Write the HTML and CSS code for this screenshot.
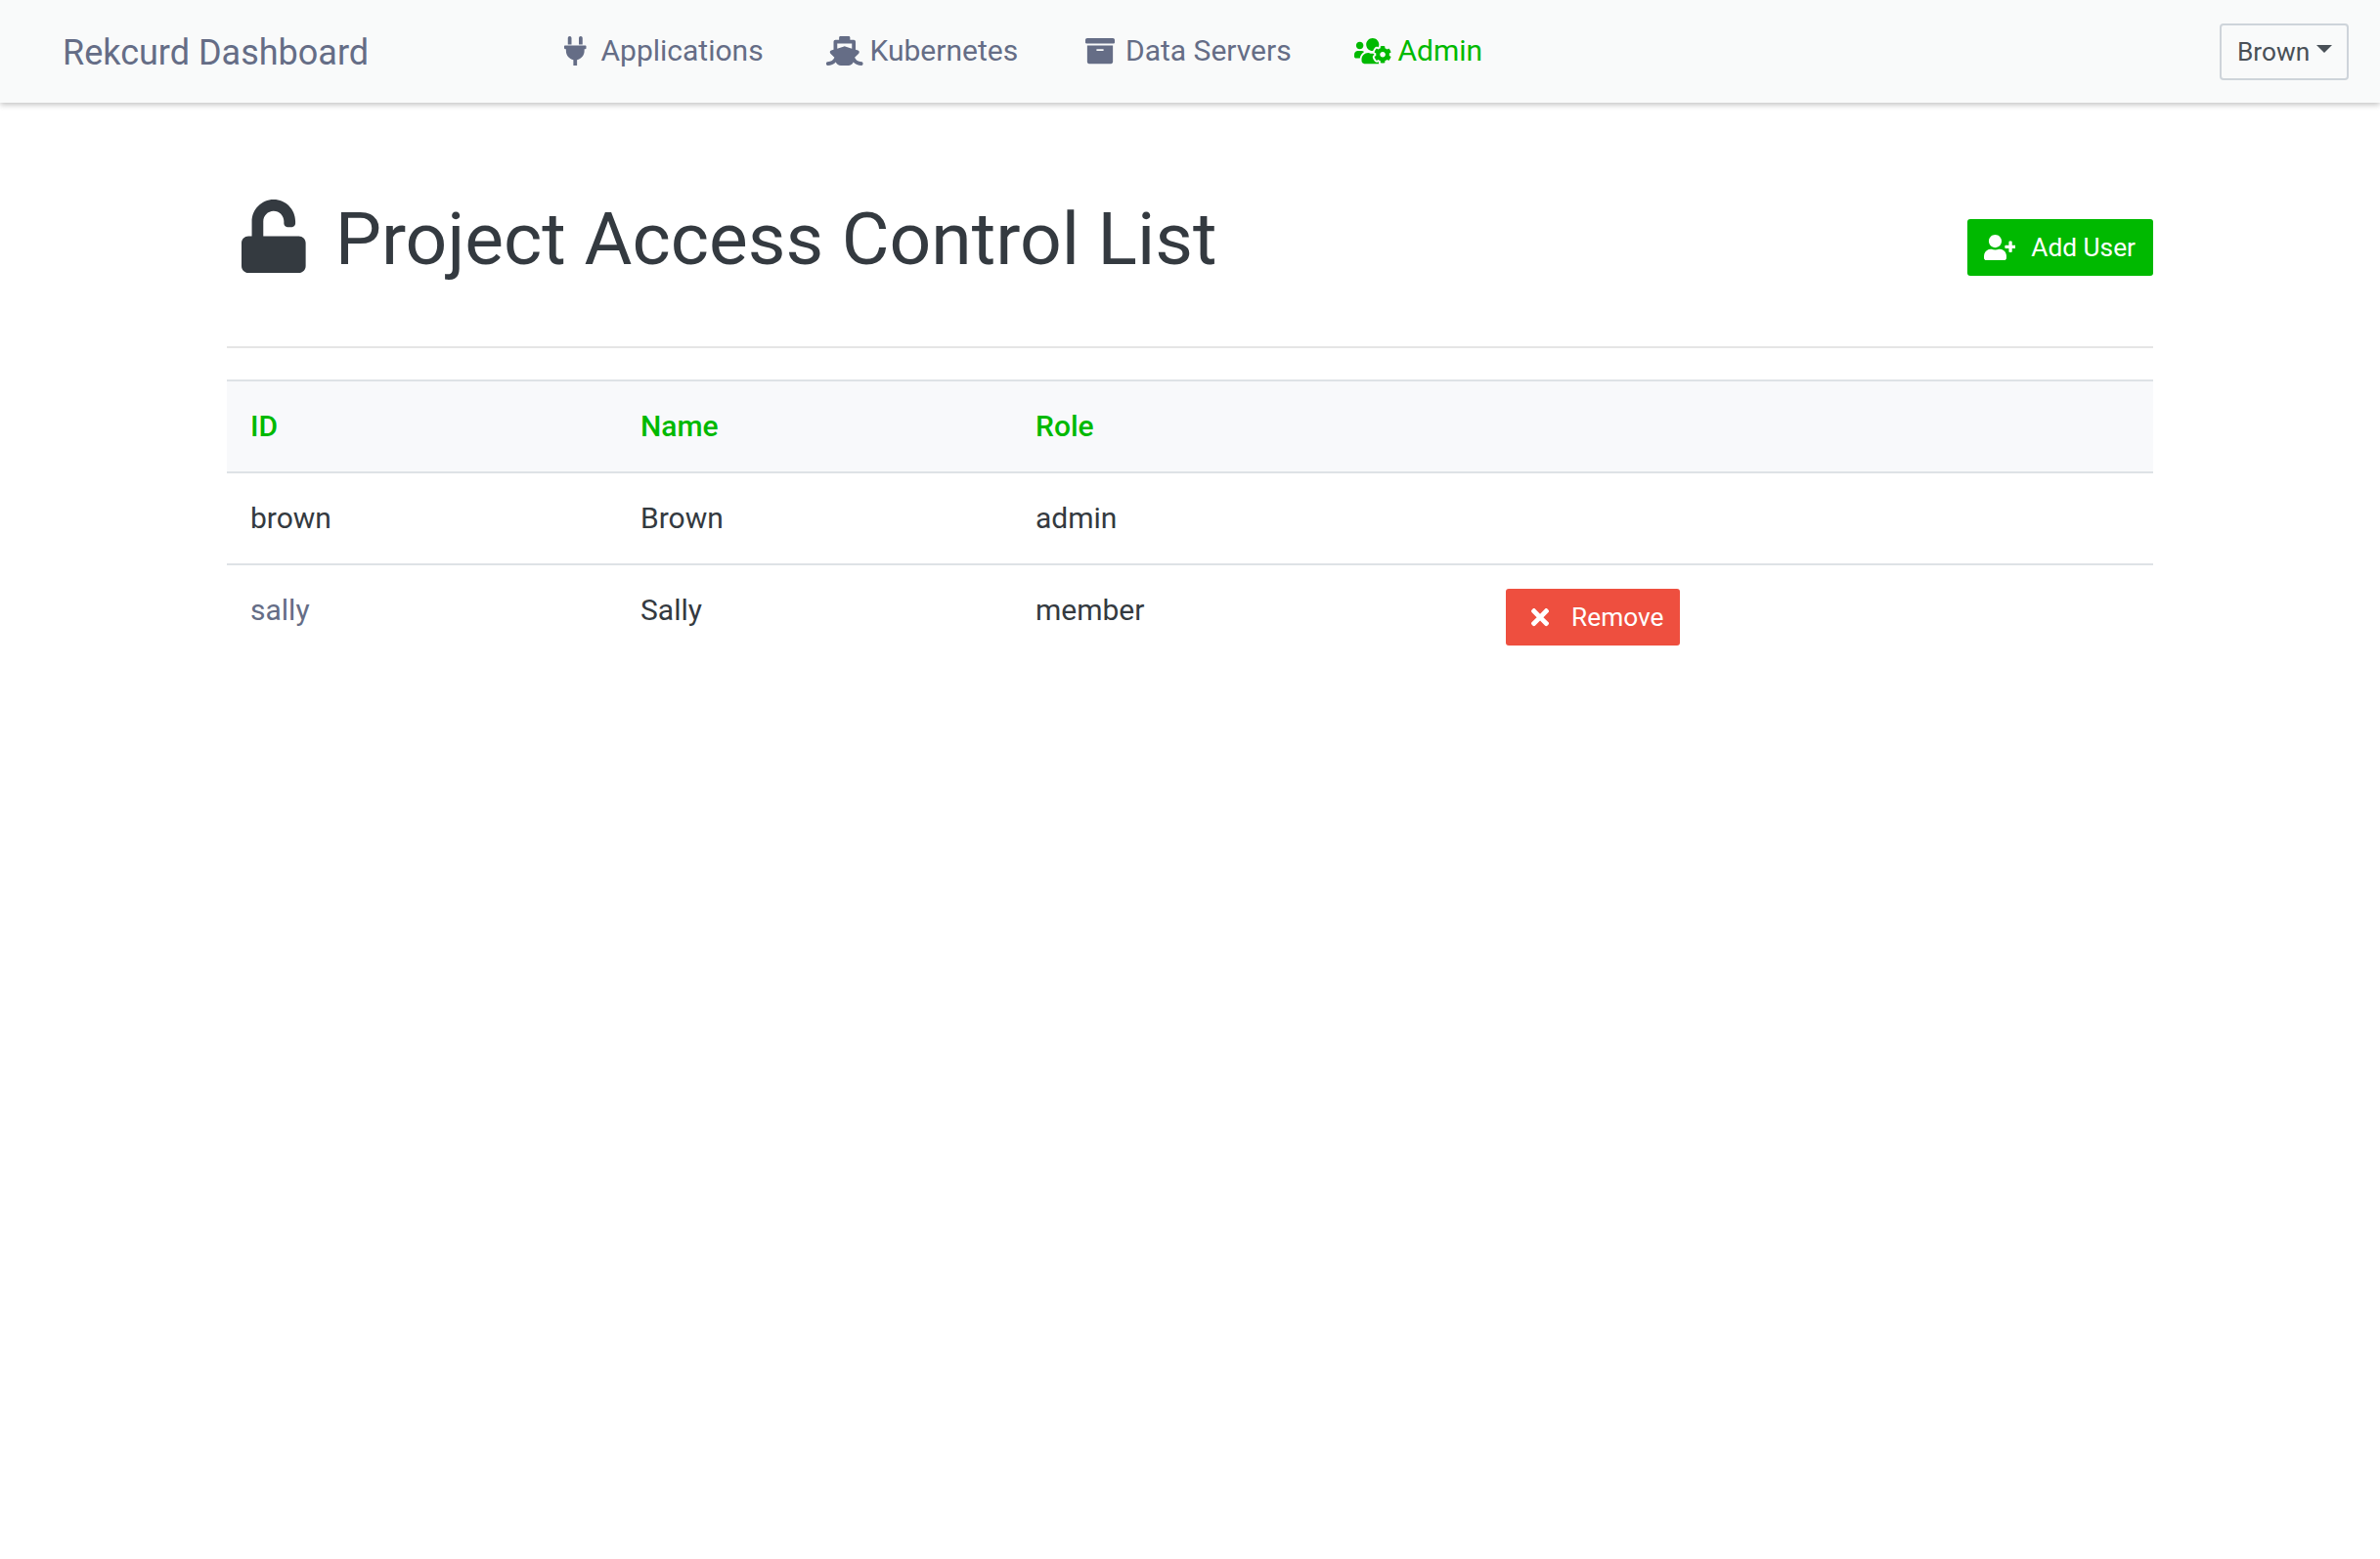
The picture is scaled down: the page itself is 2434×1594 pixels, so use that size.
FILE: index.html
```html
<!DOCTYPE html>
<html lang="en">
<head>
    <meta charset="UTF-8">
    <title>Rekcurd Dashboard</title>
    <link rel="stylesheet" href="styles.css">
</head>
<body>

    <nav class="navbar">
        <a class="brand">Rekcurd Dashboard</a>
        <ul class="nav-links">
            <li class="nav-item item-apps">
                <svg class="icon" viewBox="0 0 384 512"><path d="M256 144V32c0-17.673 14.327-32 32-32s32 14.327 32 32v112h-64zm112 16H16c-8.837 0-16 7.163-16 16v32c0 8.837 7.163 16 16 16h16v32c0 77.406 54.969 141.971 128 156.796V512h64v-99.204c73.031-14.825 128-79.39 128-156.796v-32h16c8.837 0 16-7.163 16-16v-32c0-8.837-7.163-16-16-16zM128 144V32c0-17.673-14.327-32-32-32S64 14.327 64 32v112h64z"/></svg>
                Applications
            </li>
            <li class="nav-item item-kube">
                <svg class="icon" viewBox="0 0 640 512"><path d="M496.616 372.639l70.012-70.012c16.899-16.9 9.942-45.771-12.836-53.092L512 236.102V96c0-17.673-14.327-32-32-32h-64V24c0-13.255-10.745-24-24-24H248c-13.255 0-24 10.745-24 24v40h-64c-17.673 0-32 14.327-32 32v140.102l-41.792 13.433c-22.753 7.313-29.754 36.173-12.836 53.092l70.012 70.012C125.828 416.287 85.587 448 24 448c-13.255 0-24 10.745-24 24v16c0 13.255 10.745 24 24 24 61.023 0 107.499-20.61 143.258-59.396C181.677 487.432 216.021 512 256 512h128c39.979 0 74.323-24.568 88.742-59.396C508.495 491.384 554.968 512 616 512c13.255 0 24-10.745 24-24v-16c0-13.255-10.745-24-24-24-60.817 0-101.542-31.001-119.384-75.361zM192 128h256v87.531l-118.208-37.995a31.995 31.995 0 0 0-19.584 0L192 215.531V128z"/></svg>
                Kubernetes
            </li>
            <li class="nav-item item-data">
                <svg class="icon" viewBox="0 0 512 512"><path d="M32 448c0 17.7 14.3 32 32 32h384c17.7 0 32-14.3 32-32V160H32v288zm160-212c0-6.6 5.4-12 12-12h104c6.6 0 12 5.4 12 12v8c0 6.6-5.4 12-12 12H204c-6.6 0-12-5.4-12-12v-8zM480 32H32C14.3 32 0 46.3 0 64v48c0 8.8 7.2 16 16 16h480c8.8 0 16-7.2 16-16V64c0-17.7-14.3-32-32-32z"/></svg>
                Data Servers
            </li>
            <li class="nav-item item-admin active">
                <svg class="icon" viewBox="0 0 640 512"><path d="M610.5 341.3c2.6-14.1 2.6-28.5 0-42.6l25.8-14.9c3-1.7 4.3-5.2 3.3-8.5-6.7-21.6-18.2-41.2-33.2-57.4-2.3-2.5-6-3.1-9-1.4l-25.8 14.9c-10.9-9.3-23.4-16.5-36.9-21.3v-29.8c0-3.4-2.4-6.4-5.7-7.1-22.3-5-45-4.8-66.2 0-3.3.7-5.7 3.7-5.7 7.1v29.8c-13.5 4.8-26 12-36.9 21.3l-25.8-14.9c-2.9-1.7-6.7-1.1-9 1.4-15 16.2-26.5 35.8-33.2 57.4-1 3.3.4 6.8 3.3 8.5l25.8 14.9c-2.6 14.1-2.6 28.5 0 42.6l-25.8 14.9c-3 1.7-4.3 5.2-3.3 8.5 6.7 21.6 18.2 41.1 33.2 57.4 2.3 2.5 6 3.1 9 1.4l25.8-14.9c10.9 9.3 23.4 16.5 36.9 21.3v29.8c0 3.4 2.4 6.4 5.7 7.1 22.3 5 45 4.8 66.2 0 3.3-.7 5.7-3.7 5.7-7.1v-29.8c13.5-4.8 26-12 36.9-21.3l25.8 14.9c2.9 1.7 6.7 1.1 9-1.4 15-16.2 26.5-35.8 33.2-57.4 1-3.3-.4-6.8-3.3-8.5l-25.8-14.9zM496 368.5c-26.8 0-48.5-21.8-48.5-48.5s21.8-48.5 48.5-48.5 48.5 21.8 48.5 48.5-21.7 48.5-48.5 48.5zM96 224c35.3 0 64-28.7 64-64s-28.7-64-64-64-64 28.7-64 64 28.7 64 64 64zm224 32c1.9 0 3.7-.5 5.6-.6 8.3-21.7 20.5-42.1 36.3-59.2 7.4-8 17.9-12.6 28.9-12.6 6.9 0 13.7 1.8 19.6 5.3l7.9 4.6c.8-.5 1.6-.9 2.4-1.4 7-14.6 11.2-30.8 11.2-48 0-61.9-50.1-112-112-112S208 82.1 208 144c0 61.9 50.1 112 112 112zm105.2 194.5c-2.3-1.2-4.6-2.6-6.8-3.9-8.2 4.8-15.3 9.8-27.5 9.8-10.9 0-21.4-4.6-28.9-12.6-18.3-19.8-32.3-43.9-40.2-69.6-10.7-34.5 24.9-49.7 25.8-50.3-.1-2.6-.1-5.2 0-7.8l-7.9-4.6c-3.8-2.2-7-5-9.8-8.1-3.3.2-6.5.6-9.8.6-24.6 0-47.6-6-68.5-16h-8.3C179.6 288 128 339.6 128 403.2V432c0 26.5 21.5 48 48 48h255.4c-3.7-6-6.2-12.8-6.2-20.3v-9.2zM173.1 274.6C161.5 263.1 145.6 256 128 256H64c-35.3 0-64 28.7-64 64v32c0 17.7 14.3 32 32 32h65.9c6.3-47.4 34.9-87.3 75.2-109.4z"/></svg>
                Admin
            </li>
        </ul>
        <button class="user-btn">Brown<span class="caret"></span></button>
    </nav>

    <main class="content">
        <div class="page-header">
            <h1 class="page-title">
                <svg class="title-icon" viewBox="0 0 448 512"><path d="M400 256H152V152.9c0-39.6 31.7-72.5 71.3-72.9 40-.4 72.7 32.1 72.7 72v16c0 13.3 10.7 24 24 24h32c13.3 0 24-10.7 24-24v-16C376 68 307.5-.3 223.5 0 139.5.3 72 69.5 72 153.5V256H48c-26.5 0-48 21.5-48 48v160c0 26.5 21.5 48 48 48h352c26.5 0 48-21.5 48-48V304c0-26.5-21.5-48-48-48z"/></svg>
                Project Access Control List
            </h1>
            <button class="btn btn-add">
                <svg class="btn-icon" viewBox="0 0 640 512"><path d="M624 208h-64v-64c0-8.8-7.2-16-16-16h-32c-8.8 0-16 7.2-16 16v64h-64c-8.8 0-16 7.2-16 16v32c0 8.8 7.2 16 16 16h64v64c0 8.8 7.2 16 16 16h32c8.8 0 16-7.2 16-16v-64h64c8.8 0 16-7.2 16-16v-32c0-8.8-7.2-16-16-16zm-400 48c70.7 0 128-57.3 128-128S294.7 0 224 0 96 57.3 96 128s57.3 128 128 128zm89.6 32h-16.7c-22.2 10.2-46.9 16-72.9 16s-50.6-5.8-72.9-16h-16.7C60.2 288 0 348.2 0 422.4V464c0 26.5 21.5 48 48 48h352c26.5 0 48-21.5 48-48v-41.6c0-74.2-60.2-134.4-134.4-134.4z"/></svg>
                Add User
            </button>
        </div>
        <hr class="divider">

        <table class="acl-table">
            <thead>
                <tr>
                    <th class="col-id">ID</th>
                    <th class="col-name">Name</th>
                    <th class="col-role">Role</th>
                    <th></th>
                </tr>
            </thead>
            <tbody>
                <tr>
                    <td>brown</td>
                    <td>Brown</td>
                    <td>admin</td>
                    <td></td>
                </tr>
                <tr>
                    <td class="muted">sally</td>
                    <td>Sally</td>
                    <td>member</td>
                    <td class="cell-action">
                        <button class="btn btn-remove">
                            <svg class="btn-icon" viewBox="0 0 352 512"><path d="M242.72 256l100.07-100.07c12.28-12.28 12.28-32.19 0-44.48l-22.24-22.24c-12.28-12.28-32.19-12.28-44.48 0L176 189.28 75.93 89.21c-12.28-12.28-32.19-12.28-44.48 0L9.21 111.45c-12.28 12.28-12.28 32.19 0 44.48L109.28 256 9.21 356.07c-12.28 12.28-12.28 32.19 0 44.48l22.24 22.24c12.28 12.28 32.2 12.28 44.48 0L176 322.72l100.07 100.07c12.28 12.28 32.2 12.28 44.48 0l22.24-22.24c12.28-12.28 12.28-32.19 0-44.48L242.72 256z"/></svg>
                            Remove
                        </button>
                    </td>
                </tr>
            </tbody>
        </table>
    </main>

</body>
</html>
```

FILE: styles.css
```css
* {
    box-sizing: border-box;
}

body {
    margin: 0;
    font-family: Roboto, sans-serif;
    font-size: 30px;
    line-height: 1.5;
    color: #343a40;
    background-color: #fff;
}

.navbar {
    display: flex;
    align-items: center;
    height: 105px;
    padding: 0 32px 0 64px;
    background-color: #f9fafa;
    box-shadow: 0 2px 6px rgba(0, 0, 0, 0.25);
}

.brand {
    width: 513px;
    padding-top: 2px;
    font-size: 36px;
    color: #656d86;
}

.nav-links {
    display: flex;
    flex: 1;
    margin: 0;
    padding: 0 0 2px;
    list-style: none;
}

.nav-item {
    display: flex;
    align-items: center;
    color: #656d86;
}

.nav-item.active {
    color: #00b900;
}

.item-apps {
    gap: 15px;
    width: 268px;
}

.item-kube {
    gap: 7px;
    width: 265px;
}

.item-data {
    gap: 11px;
    width: 275px;
}

.item-admin {
    gap: 7px;
}

.icon {
    height: 30px;
    fill: currentColor;
}

.user-btn {
    display: flex;
    align-items: center;
    width: 132px;
    height: 58px;
    padding: 0 16px;
    font-family: inherit;
    font-size: 26.25px;
    color: #495057;
    background: none;
    border: 2px solid #ced4da;
    border-radius: 4px;
}

.caret {
    margin: -6px 0 0 7px;
    border-top: 8px solid #495057;
    border-left: 8px solid transparent;
    border-right: 8px solid transparent;
}

.content {
    padding: 0 232px;
}

.page-header {
    display: flex;
    justify-content: space-between;
    align-items: flex-start;
    height: 249px;
    padding: 94px 0 0 15px;
}

.page-title {
    display: flex;
    align-items: center;
    gap: 30px;
    margin: 0;
    font-size: 75px;
    font-weight: 400;
    line-height: 90px;
}

.title-icon {
    height: 75px;
    margin-bottom: 6px;
    fill: currentColor;
}

.btn {
    display: flex;
    align-items: center;
    height: 58px;
    font-family: inherit;
    font-size: 26.25px;
    color: #fff;
    border: none;
    border-radius: 3px;
}

.btn-icon {
    height: 26.25px;
    fill: currentColor;
}

.btn-add {
    gap: 16px;
    margin-top: 25px;
    padding: 0 18px 0 17px;
    background-color: #00b900;
}

.btn-remove {
    gap: 23px;
    margin-top: 1px;
    padding: 0 17px 0 26px;
    background-color: #ee4f3f;
}

.divider {
    margin: 0 0 32px;
    border: none;
    border-top: 2px solid #e5e5e5;
}

.acl-table {
    width: 100%;
    border-collapse: collapse;
    table-layout: fixed;
}

.acl-table th,
.acl-table td {
    padding: 23px 24px 24px;
    text-align: left;
    vertical-align: top;
    border-top: 2px solid #dee2e6;
}

.acl-table th {
    font-weight: 500;
    color: #00b900;
    background-color: #f8f9fb;
    border-bottom: 2px solid #dee2e6;
}

.col-id {
    width: 399px;
}

.col-name {
    width: 404px;
}

.col-role {
    width: 481px;
}

.muted {
    color: #656d86;
}
```
